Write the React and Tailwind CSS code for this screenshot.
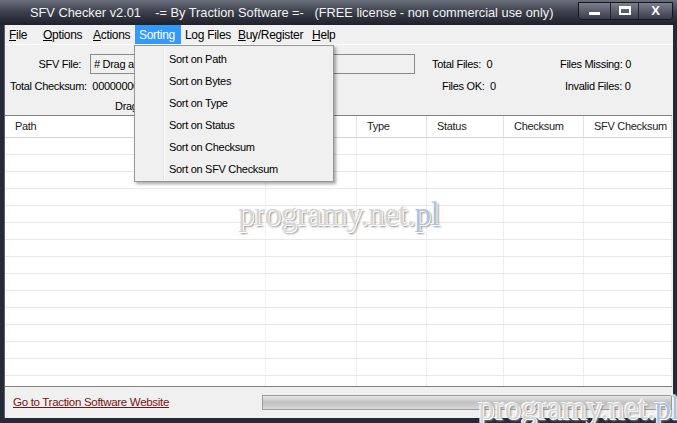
import React from 'react';

const menus = [
  { u: 'F', rest: 'ile', w: 'w-[34px]' },
  { u: 'O', rest: 'ptions', w: 'w-[50px]' },
  { u: 'A', rest: 'ctions', w: 'w-[46px]' },
  { u: '', rest: 'Sorting', w: 'w-[46px]', active: true },
  { u: '', rest: 'Log Files', w: 'w-[53px]' },
  { u: 'B', rest: 'uy/Register', w: 'w-[74px]' },
  { u: 'H', rest: 'elp', w: 'w-[33px]' },
];

const sortItems = [
  'Sort on Path',
  'Sort on Bytes',
  'Sort on Type',
  'Sort on Status',
  'Sort on Checksum',
  'Sort on SFV Checksum',
];

const columns = [
  { name: 'Path', w: 'w-[261px]' },
  { name: 'Bytes', w: 'w-[91px]' },
  { name: 'Type', w: 'w-[70px]' },
  { name: 'Status', w: 'w-[77px]' },
  { name: 'Checksum', w: 'w-[80px]' },
  { name: 'SFV Checksum', w: 'flex-1' },
];

const rows = Array.from({ length: 15 });

const Watermark = ({ className }) => (
  <div
    className={`absolute whitespace-nowrap font-['Liberation_Serif',serif] text-[33px] tracking-[-0.5px] pointer-events-none ${className}`}
    style={{ textShadow: '1px 1px 0 #fff, -1px -1px 0 #fff, 2px 2px 2px #888' }}
  >
    <span className="text-[#d6d6d6]">programy.net.</span>
    <span className="text-[#a9c4e0]">pl</span>
  </div>
);

export default function App() {
  return (
    <div className="w-[677px] h-[423px] relative overflow-hidden bg-[#262a36] flex flex-col font-['Liberation_Sans',Arial,sans-serif] text-[11px] tracking-[-0.3px] text-black">
      {/* title bar */}
      <div className="h-[25px] flex items-center bg-gradient-to-b from-[#6a6f7c] via-[#3a3e4a] to-[#1f222b] pl-[30px] pr-[4px]">
        <span className="text-[#f2f2f2] text-[12.8px] tracking-normal whitespace-pre">
          {'SFV Checker v2.01    -= By Traction Software =-   (FREE license - non commercial use only)'}
        </span>
        <div className="ml-auto mt-[-4px] flex shrink-0 h-[18px] border border-[#15171d] rounded-b-[4px] overflow-hidden">
          <div className="w-[32px] flex items-end justify-center pb-[4px] bg-gradient-to-b from-[#7b808c] to-[#3a3e4a] border-r border-[#22252d]">
            <div className="w-[11px] h-[3px] bg-white" />
          </div>
          <div className="w-[28px] flex items-center justify-center bg-gradient-to-b from-[#7b808c] to-[#3a3e4a] border-r border-[#22252d]">
            <div className="w-[12px] h-[9px] border-2 border-t-[3px] border-white" />
          </div>
          <div className="w-[33px] flex items-center justify-center bg-gradient-to-b from-[#7b808c] to-[#3a3e4a] text-white font-bold text-[13px]">
            X
          </div>
        </div>
      </div>

      {/* window body */}
      <div className="flex-1 mx-[4px] mb-[5px] bg-[#f0f0f0] flex flex-col border-l border-[#5a5f6a]">
        {/* menu bar */}
        <div className="h-[20px] flex items-center bg-[#f0f0f0] border-b border-white text-[12px]">
          {menus.map((m) => (
            <div
              key={m.rest}
              className={`${m.w} h-full flex items-center pl-[4px] whitespace-nowrap ${
                m.active ? 'bg-[#3399ff] text-white' : ''
              }`}
            >
              {m.u && <span className="underline">{m.u}</span>}
              {m.rest}
            </div>
          ))}
        </div>

        {/* top panel */}
        <div className="h-[70px] flex flex-col">
          <div className="flex items-center h-[30px] pt-[8px]">
            <span className="w-[76px] text-right">SFV File:</span>
            <div className="ml-[9px] w-[325px] h-[20px] border border-[#8a8a8a] flex items-center pl-[3px]">
              # Drag and drop SFV file here
            </div>
            <span className="ml-[17px] w-[128px]">Total Files:&nbsp; 0</span>
            <span>Files Missing: 0</span>
          </div>
          <div className="flex items-center h-[23px]">
            <span className="ml-[5px] w-[432px]">Total Checksum:&nbsp; 00000000</span>
            <span className="w-[123px]">Files OK:&nbsp; 0</span>
            <span>Invalid Files: 0</span>
          </div>
          <div className="flex items-center h-[17px] pl-[110px]">
            Drag and drop file(s) or folders into list below
          </div>
        </div>

        {/* list */}
        <div className="h-[272px] bg-white border-t border-[#828282] border-b border-[#828282] mr-[1px] flex flex-col overflow-hidden">
          <div className="h-[22px] flex border-b border-[#d5d5d5] shrink-0">
            {columns.map((c) => (
              <div
                key={c.name}
                className={`${c.w} border-r border-[#e3e3e3] flex items-center pl-[10px] text-[#222] whitespace-nowrap`}
              >
                {c.name}
              </div>
            ))}
          </div>
          {rows.map((_, i) => (
            <div key={i} className="h-[17px] flex border-b border-[#e8e8e8] shrink-0">
              {columns.map((c) => (
                <div key={c.name} className={`${c.w} border-r border-[#f0f0f0]`} />
              ))}
            </div>
          ))}
        </div>

        {/* status bar */}
        <div className="flex-1 flex items-center pl-[8px] pr-[1px] text-[11.5px]">
          <span className="text-[#7a1111] underline">Go to Traction Software Website</span>
          <div className="ml-auto w-[410px] h-[15px] border border-[#9a9a9a] bg-gradient-to-b from-[#e6e6e6] via-[#c2c2c2] to-[#d8d8d8]" />
        </div>
      </div>

      {/* Sorting dropdown */}
      <div className="absolute left-[134px] top-[45px] w-[200px] h-[137px] bg-[#f0f0f0] border border-[#979797] shadow-[2px_2px_3px_rgba(0,0,0,0.35)] py-[2px] pl-[2px]">
        <div className="absolute left-[28px] top-[2px] bottom-[2px] w-[2px] border-l border-[#e2e3e3] bg-white" />
        {sortItems.map((s) => (
          <div key={s} className="h-[22px] flex items-center pl-[32px]">
            {s}
          </div>
        ))}
      </div>

      <Watermark className="left-[238px] top-[190px]" />
      <Watermark className="left-[478px] top-[384px]" />
    </div>
  );
}
